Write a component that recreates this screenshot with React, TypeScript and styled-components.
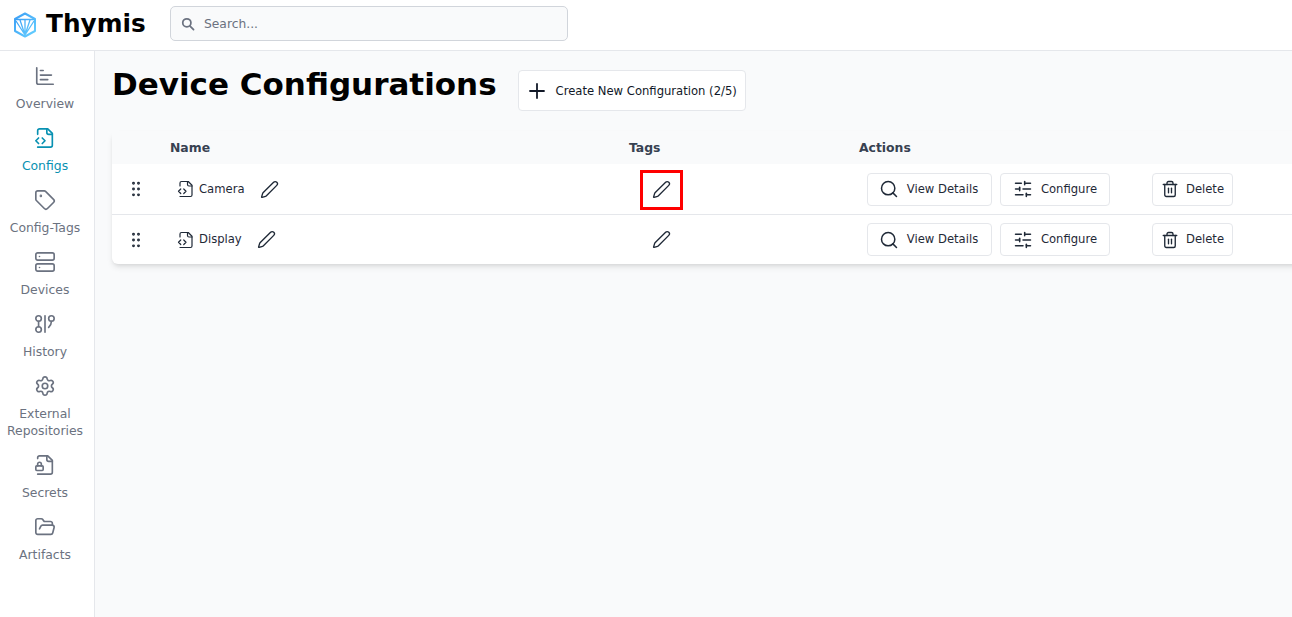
import React from "react";
import styled, { createGlobalStyle } from "styled-components";
import { ChartBar, Tag, Server, GitGraph, Settings, FolderOpen, Pen, Search, SlidersHorizontal, Trash2, Plus, GripVertical } from "lucide-react";

const Global = createGlobalStyle`
  html, body { margin: 0; padding: 0; height: 100%; overflow: hidden; }
  body { font-family: "DejaVu Sans", sans-serif; background: #fff; color: #111827; }
  * { box-sizing: border-box; }
`;

const Page = styled.div`
  width: 1292px; height: 617px; display: flex; flex-direction: column; overflow: hidden;
`;
const Header = styled.header`
  height: 51px; flex: none; display: flex; align-items: center; background: #fff;
  border-bottom: 1px solid #e5e7eb; padding-left: 13px;
`;
const Brand = styled.div`
  display: flex; align-items: center; gap: 9px; width: 157px; flex: none;
  font-size: 24.75px; line-height: 30px; font-weight: 700; color: #000;
`;
const BrandName = styled.span`
  margin-top: -2px;
`;
const SearchBox = styled.div`
  width: 398px; height: 35px; display: flex; align-items: center; gap: 9px; padding-left: 10px;
  background: #f9fafb; border: 1px solid #d1d5db; border-radius: 5px;
  font-size: 12.3px; color: #6b7280; margin-top: -3px;
`;
const Body = styled.div`
  flex: 1; display: flex; min-height: 0;
`;
const Sidebar = styled.nav`
  width: 95px; flex: none; background: #fff; border-right: 1px solid #e5e7eb;
  padding: 13px 4px 0 0; display: flex; flex-direction: column;
`;
const NavItem = styled.div<{ $active?: boolean }>`
  display: flex; flex-direction: column; align-items: center; text-align: center;
  padding-bottom: 14px; font-size: 12.4px; line-height: 17px; white-space: nowrap;
  color: ${(p) => (p.$active ? "#0891b2" : "#6b7280")};
  svg { display: block; margin: 1px 0 8px; }
`;
const Main = styled.main`
  flex: 1; background: #f9fafb; padding: 13px 0 0 17px; overflow: hidden; min-width: 0;
`;
const TitleRow = styled.div`
  display: flex; align-items: flex-start; gap: 21px; height: 67px;
`;
const Title = styled.h1`
  margin: 0; font-size: 31px; line-height: 40px; font-weight: 700; color: #000;
`;
const CreateButton = styled.button`
  display: flex; align-items: center; gap: 7px; height: 41px; margin-top: 6px; padding: 0 8px 0 6px;
  background: #fff; border: 1px solid #e5e7eb; border-radius: 4px;
  font: 11.6px "DejaVu Sans", sans-serif; color: #111827;
`;
const Table = styled.div`
  width: 1200px; background: #fff; border-radius: 6px;
  box-shadow: 0 4px 6px -1px rgba(0,0,0,.1), 0 2px 4px -2px rgba(0,0,0,.1);
`;
const Columns = `display: grid; grid-template-columns: 58px 459px 230px 1fr;`;
const HeadRow = styled.div`
  ${Columns} height: 33px; align-items: center; background: #f9fafb;
  font-size: 12.4px; font-weight: 700; color: #374151;
`;
const Row = styled.div<{ $last?: boolean }>`
  ${Columns} height: ${(p) => (p.$last ? "49px" : "51px")}; align-items: center;
  border-bottom: ${(p) => (p.$last ? "none" : "1px solid #e5e7eb")};
`;
const Handle = styled.div`
  display: flex; justify-content: center; width: 48px; color: #1f2937;
`;
const NameCell = styled.div`
  display: flex; align-items: center; padding-left: 7px; font-size: 11.6px; line-height: 15px; color: #1f2937;
`;
const NameText = styled.span`
  margin: 0 15px 0 4px;
`;
const TagsCell = styled.div`
  display: flex; padding-left: 11px;
`;
const TagEdit = styled.div<{ $marked?: boolean }>`
  position: relative; width: 43px; height: 40px; display: flex; align-items: center; justify-content: center; color: #1f2937;
  ${(p) => (p.$marked ? "&::after { content: ''; position: absolute; inset: 1px 0 -1px 0; border: 3px solid #ff0000; }" : "")}
`;
const ActionsCell = styled.div`
  display: flex; align-items: center; padding-left: 8px;
`;
const ActionButton = styled.button<{ $width: number; $gap?: number; $inset?: number }>`
  width: ${(p) => p.$width}px; height: 33px; display: flex; align-items: center; justify-content: center;
  gap: ${(p) => p.$gap ?? 8}px; margin-right: 8px; padding: 0 ${(p) => p.$inset ?? 0}px 0 0;
  background: #fff; border: 1px solid #e5e7eb; border-radius: 4px;
  font: 11.6px/15px "DejaVu Sans", sans-serif; color: #1f2937;
`;
const DeleteSlot = styled.div`
  margin-left: 34px;
`;

const Logo = () => (
  <svg width="24" height="26" viewBox="0 0 24 26" fill="none" strokeLinejoin="round">
    <defs>
      <linearGradient id="lg" x1="0" y1="0" x2="1" y2="1">
        <stop offset="0" stopColor="#3b9ef5" />
        <stop offset="1" stopColor="#66d0ff" />
      </linearGradient>
    </defs>
    <path d="M12 1.5 22 7v12l-10 5.5L2 19V7z" stroke="url(#lg)" strokeWidth="2" />
    <path d="M2.5 7.5h19M7 8l5 15 5-15M12 8v15M3 9l9 14 9-14" stroke="url(#lg)" strokeWidth="1.3" />
  </svg>
);

const FileCode = ({ size = 22, sw = 1.8 }: { size?: number; sw?: number }) => (
  <svg width={size} height={size} viewBox="0 0 24 24" fill="none" stroke="currentColor" strokeWidth={sw} strokeLinecap="round" strokeLinejoin="round">
    <path d="M4 22h14a2 2 0 0 0 2-2V7l-5-5H6a2 2 0 0 0-2 2v4" />
    <path d="M14 2v4a2 2 0 0 0 2 2h4" />
    <path d="m5 12-3 3 3 3" />
    <path d="m9 18 3-3-3-3" />
  </svg>
);

const FileLock = () => (
  <svg width="22" height="22" viewBox="0 0 24 24" fill="none" stroke="currentColor" strokeWidth="1.8" strokeLinecap="round" strokeLinejoin="round">
    <path d="M4 22h14a2 2 0 0 0 2-2V7l-5-5H6a2 2 0 0 0-2 2v1" />
    <path d="M14 2v4a2 2 0 0 0 2 2h4" />
    <rect width="8" height="5" x="2" y="13" rx="1" />
    <path d="M8 13v-2a2 2 0 1 0-4 0v2" />
  </svg>
);

const navIcon = { size: 22, strokeWidth: 1.8 };

const navItems: { label: React.ReactNode; active?: boolean; icon: React.ReactNode }[] = [
  { label: "Overview", icon: <ChartBar {...navIcon} /> },
  { label: "Configs", active: true, icon: <FileCode /> },
  { label: "Config-Tags", icon: <Tag {...navIcon} /> },
  { label: "Devices", icon: <Server {...navIcon} /> },
  { label: "History", icon: <GitGraph {...navIcon} /> },
  { label: <>External<br />Repositories</>, icon: <Settings {...navIcon} /> },
  { label: "Secrets", icon: <FileLock /> },
  { label: "Artifacts", icon: <FolderOpen {...navIcon} /> },
];

const rows = [
  { name: "Camera", marked: true },
  { name: "Display", marked: false },
];

export default function App() {
  return (
    <Page>
      <Global />
      <Header>
        <Brand><Logo /><BrandName>Thymis</BrandName></Brand>
        <SearchBox>
          <svg width="14" height="14" viewBox="0 0 24 24" fill="none" stroke="#6b7280" strokeWidth="3" strokeLinecap="round"><circle cx="10" cy="10" r="7" /><path d="m15.5 15.5 6 6" /></svg>
          Search...
        </SearchBox>
      </Header>
      <Body>
        <Sidebar>
          {navItems.map((n, i) => (
            <NavItem key={i} $active={n.active}>
              {n.icon}
              <span>{n.label}</span>
            </NavItem>
          ))}
        </Sidebar>
        <Main>
          <TitleRow>
            <Title>Device Configurations</Title>
            <CreateButton>
              <Plus size={24} strokeWidth={1.8} />
              Create New Configuration (2/5)
            </CreateButton>
          </TitleRow>
          <Table>
            <HeadRow>
              <span />
              <span>Name</span>
              <span>Tags</span>
              <span>Actions</span>
            </HeadRow>
            {rows.map((r, i) => (
              <Row key={r.name} $last={i === rows.length - 1}>
                <Handle><GripVertical size={20} strokeWidth={1.5} /></Handle>
                <NameCell>
                  <FileCode size={18} sw={1.6} />
                  <NameText>{r.name}</NameText>
                  <Pen size={19} strokeWidth={1.7} />
                </NameCell>
                <TagsCell>
                  <TagEdit $marked={r.marked}><Pen size={19} strokeWidth={1.7} /></TagEdit>
                </TagsCell>
                <ActionsCell>
                  <ActionButton $width={125} $inset={2}><Search size={20} strokeWidth={1.8} />View Details</ActionButton>
                  <ActionButton $width={110}><SlidersHorizontal size={20} strokeWidth={1.8} />Configure</ActionButton>
                  <DeleteSlot>
                    <ActionButton $width={81} $gap={7}><Trash2 size={18} strokeWidth={1.8} />Delete</ActionButton>
                  </DeleteSlot>
                </ActionsCell>
              </Row>
            ))}
          </Table>
        </Main>
      </Body>
    </Page>
  );
}
